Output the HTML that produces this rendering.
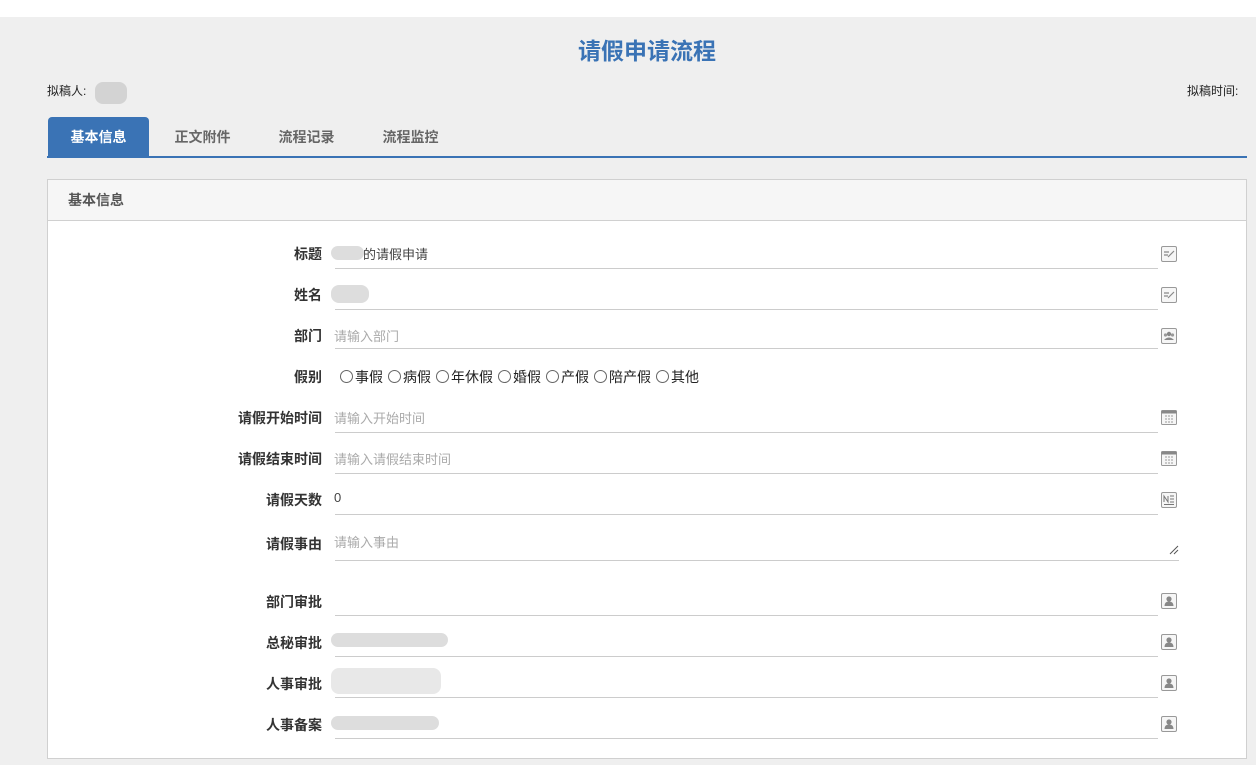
<!DOCTYPE html>
<html><head><meta charset="utf-8"><style>
*{margin:0;padding:0;box-sizing:border-box}
body{width:1256px;height:765px;background:#efefef;font-family:"Liberation Sans","Noto Sans CJK SC",sans-serif;font-size:13px;color:#333;position:relative;overflow:hidden}
.top{position:absolute;left:0;top:0;width:1256px;height:17px;background:#fff}
.a{position:absolute}
.title{left:0;width:1294px;top:32px;text-align:center;font-size:23px;font-weight:bold;color:#3a73b5}
.tab{top:117px;height:40px;line-height:40px;font-size:14px;font-weight:bold;color:#666;text-align:center}
.panel{left:47px;top:179px;width:1200px;height:580px;background:#fff;border:1px solid #d0d0d0}
.ph{left:0;top:0;width:1198px;height:41px;background:#f6f6f6;border-bottom:1px solid #d0d0d0;line-height:40px;padding-left:20px;font-size:14px;font-weight:bold;color:#555}
.lb{right:924px;width:120px;text-align:right;font-weight:bold;font-size:14px;color:#333}
.ln{left:287px;width:823px;height:1px;background:#ccc}
.val{left:286px;font-size:13px;color:#444}
.ph2{color:#aaa}
.ic{left:1113px;width:16px;height:16px}
.blur{background:#d4d4d4;border-radius:8px;height:14px;opacity:.8}
.r{display:inline-block;width:13px;height:13px;border:1px solid #666;border-radius:50%;vertical-align:-1px;margin:0 2px 0 5px}
</style></head><body>
<svg width="0" height="0" style="position:absolute">
<defs>
<symbol id="edit" viewBox="0 0 16 16"><rect x="0.5" y="0.5" width="15" height="15" rx="1.5" fill="#f6f6f6" stroke="#999"/><path d="M3 6h5M3 9h4M7 11l6-6" stroke="#888" stroke-width="1.2" fill="none"/></symbol>
<symbol id="grp" viewBox="0 0 16 16"><rect x="0.5" y="0.5" width="15" height="15" rx="1.5" fill="#f6f6f6" stroke="#999"/><circle cx="8" cy="6" r="2.2" fill="#888"/><circle cx="4.5" cy="7" r="1.6" fill="#999"/><circle cx="11.5" cy="7" r="1.6" fill="#999"/><path d="M3 12q5-5 10 0z" fill="#888"/></symbol>
<symbol id="cal" viewBox="0 0 16 16"><rect x="0.5" y="1.5" width="15" height="14" rx="1" fill="#f6f6f6" stroke="#999"/><rect x="0.5" y="1.5" width="15" height="3" fill="#888"/><path d="M4 7h2M7 7h2M10 7h2M4 10h2M7 10h2M10 10h2M4 13h2M7 13h2M10 13h2" stroke="#999"/></symbol>
<symbol id="num" viewBox="0 0 16 16"><rect x="0.5" y="0.5" width="15" height="15" rx="1.5" fill="#f6f6f6" stroke="#999"/><path d="M3 10V4l4 6V4M9 4h4M9 7h4M9 10h4M3 12.5h10" stroke="#777" fill="none"/></symbol>
<symbol id="usr" viewBox="0 0 16 16"><rect x="0.5" y="0.5" width="15" height="15" rx="1.5" fill="#f6f6f6" stroke="#999"/><circle cx="8" cy="6" r="2.6" fill="#888"/><path d="M3.5 13q0-4.5 4.5-4.5t4.5 4.5z" fill="#888"/></symbol>
</defs></svg>
<div class="top"></div>
<div class="a title">请假申请流程</div>
<div class="a" style="left:47px;top:82px;font-size:12px;color:#222">拟稿人:</div>
<div class="a blur" style="left:95px;top:82px;width:32px;height:22px;background:#ccc"></div>
<div class="a" style="left:1187px;top:82px;font-size:12px;color:#222">拟稿时间:</div>
<div class="a tab" style="left:48px;width:101px;background:#3a73b5;color:#fff;border-radius:4px 4px 0 0">基本信息</div>
<div class="a tab" style="left:155px;width:95px">正文附件</div>
<div class="a tab" style="left:259px;width:95px">流程记录</div>
<div class="a tab" style="left:363px;width:95px">流程监控</div>
<div class="a" style="left:47px;top:156px;width:1200px;height:2px;background:#3a73b5"></div>
<div class="a panel">
<div class="a ph">基本信息</div>

<div class="a lb" style="top:64px">标题</div>
<div class="a blur" style="left:283px;top:66px;width:33px"></div>
<div class="a val" style="left:315px;top:64px">的请假申请</div>
<div class="a ln" style="top:88px"></div>
<svg class="a ic" style="top:66px"><use href="#edit"/></svg>

<div class="a lb" style="top:105px">姓名</div>
<div class="a blur" style="left:283px;top:105px;width:38px;height:18px"></div>
<div class="a ln" style="top:129px"></div>
<svg class="a ic" style="top:107px"><use href="#edit"/></svg>

<div class="a lb" style="top:146px">部门</div>
<div class="a val ph2" style="top:146px">请输入部门</div>
<div class="a ln" style="top:168px"></div>
<svg class="a ic" style="top:148px"><use href="#grp"/></svg>

<div class="a lb" style="top:187px">假别</div>
<div class="a val" style="left:287px;top:187px;color:#222;font-size:14px"><span class="r"></span>事假<span class="r"></span>病假<span class="r"></span>年休假<span class="r"></span>婚假<span class="r"></span>产假<span class="r"></span>陪产假<span class="r"></span>其他</div>

<div class="a lb" style="top:228px">请假开始时间</div>
<div class="a val ph2" style="top:228px">请输入开始时间</div>
<div class="a ln" style="top:252px"></div>
<svg class="a ic" style="top:229px"><use href="#cal"/></svg>

<div class="a lb" style="top:269px">请假结束时间</div>
<div class="a val ph2" style="top:269px">请输入请假结束时间</div>
<div class="a ln" style="top:293px"></div>
<svg class="a ic" style="top:270px"><use href="#cal"/></svg>

<div class="a lb" style="top:310px">请假天数</div>
<div class="a val" style="top:310px">0</div>
<div class="a ln" style="top:334px"></div>
<svg class="a ic" style="top:312px"><use href="#num"/></svg>

<div class="a lb" style="top:354px">请假事由</div>
<div class="a val ph2" style="top:352px">请输入事由</div>
<div class="a ln" style="top:380px;width:844px"></div>
<svg class="a" style="left:1121px;top:365px" width="10" height="10"><path d="M1 9L9 1M5 9L9 5" stroke="#555" stroke-width="1"/></svg>

<div class="a lb" style="top:412px">部门审批</div>
<div class="a ln" style="top:435px"></div>
<svg class="a ic" style="top:413px"><use href="#usr"/></svg>

<div class="a lb" style="top:453px">总秘审批</div>
<div class="a blur" style="left:283px;top:453px;width:117px"></div>
<div class="a ln" style="top:476px"></div>
<svg class="a ic" style="top:454px"><use href="#usr"/></svg>

<div class="a lb" style="top:494px">人事审批</div>
<div class="a blur" style="left:283px;top:488px;width:110px;height:26px;background:#e2e2e2"></div>
<div class="a ln" style="top:517px"></div>
<svg class="a ic" style="top:495px"><use href="#usr"/></svg>

<div class="a lb" style="top:535px">人事备案</div>
<div class="a blur" style="left:283px;top:536px;width:108px"></div>
<div class="a ln" style="top:558px"></div>
<svg class="a ic" style="top:536px"><use href="#usr"/></svg>
</div>
</body></html>
